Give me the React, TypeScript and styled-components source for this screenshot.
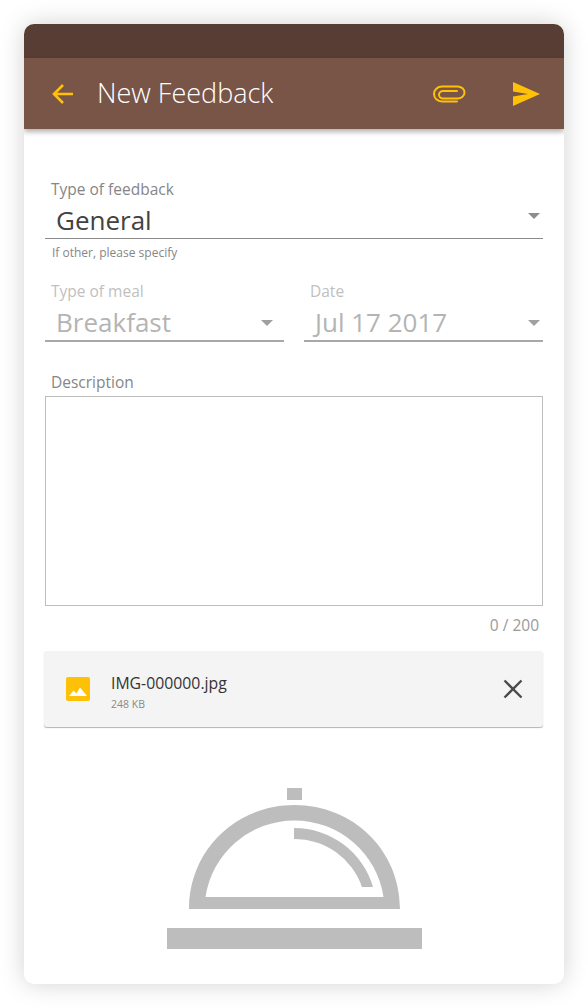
import React from 'react';
import styled, { createGlobalStyle } from 'styled-components';

const GlobalStyle = createGlobalStyle`
  html, body {
    margin: 0;
    padding: 0;
    background: #fff;
    font-family: 'Open Sans', 'Noto Sans', sans-serif;
  }
`;

const Page = styled.div`
  width: 588px;
  height: 1008px;
  padding: 24px;
  box-sizing: border-box;
  overflow: hidden;
`;

const Card = styled.div`
  width: 540px;
  height: 960px;
  background: #fff;
  border-radius: 10px;
  overflow: hidden;
  box-shadow: 0 0 24px rgba(0, 0, 0, 0.18);
  display: flex;
  flex-direction: column;
`;

const StatusBar = styled.div`
  height: 34px;
  background: #573d33;
`;

const Toolbar = styled.header`
  height: 71px;
  background: #795548;
  display: flex;
  align-items: center;
  padding: 0 24px 0 27px;
  box-shadow: 0 3px 5px rgba(0, 0, 0, 0.3);
  position: relative;
`;

const Title = styled.h1`
  margin: 0 0 2px 22px;
  flex: 1;
  font-size: 27px;
  font-weight: 300;
  color: #fff;
  line-height: 34px;
`;

const ToolbarIcons = styled.div`
  display: flex;
  align-items: center;
  gap: 46px;
`;

const Form = styled.div`
  padding: 50px 21px 0;
  display: flex;
  flex-direction: column;
`;

const Label = styled.label<{ $muted?: boolean }>`
  display: block;
  padding: 1px 0 0 6px;
  font-size: 15.5px;
  line-height: 18px;
  color: ${p => (p.$muted ? '#c0c0c0' : '#868686')};
`;

const SelectRow = styled.div<{ $muted?: boolean; $caretGap?: number }>`
  display: flex;
  align-items: center;
  justify-content: space-between;
  height: 36px;
  padding: 4px ${p => p.$caretGap ?? 3}px 0 11px;
  border-bottom: ${p => (p.$muted ? '2px solid #a8a8a8' : '1px solid #8a8a8a')};
  font-size: 26px;
  color: ${p => (p.$muted ? '#b4b4b4' : '#424242')};
`;

const Caret = styled.span<{ $muted?: boolean }>`
  width: 0;
  height: 0;
  border-left: 6.5px solid transparent;
  border-right: 6.5px solid transparent;
  border-top: 6.5px solid ${p => (p.$muted ? '#a0a0a0' : '#8e8e8e')};
  margin-top: ${p => (p.$muted ? '2px' : '0')};
  margin-bottom: ${p => (p.$muted ? '0' : '8px')};
`;

const Hint = styled.div`
  padding: 5px 0 0 7px;
  font-size: 12px;
  line-height: 17px;
  color: #868686;
`;

const TwoCols = styled.div`
  display: grid;
  grid-template-columns: 239px 239px;
  gap: 20px;
  margin-top: 20px;
`;

const Description = styled.div`
  height: 208px;
  margin-top: 5px;
  border: 1px solid #bdbdbd;
`;

const DescriptionBlock = styled.div`
  margin-top: 30px;
`;

const Counter = styled.div`
  text-align: right;
  padding: 10px 4px 0 0;
  font-size: 15.5px;
  line-height: 19px;
  color: #9a9a9a;
`;

const Attachment = styled.div`
  margin: 16px 0 0 -1px;
  height: 76px;
  background: #f4f4f4;
  border-radius: 3px;
  box-shadow: 0 1px 1px rgba(0, 0, 0, 0.3);
  display: flex;
  align-items: center;
  padding: 0 20px 0 22px;
`;

const FileInfo = styled.div`
  flex: 1;
  margin-left: 21px;
  padding-top: 4px;
`;

const FileName = styled.div`
  font-size: 15.8px;
  line-height: 20px;
  color: #333;
`;

const FileSize = styled.div`
  font-size: 10.5px;
  line-height: 12px;
  margin-top: 5px;
  color: #8a8a8a;
`;

const Illustration = styled.div`
  display: flex;
  justify-content: center;
  margin-top: 61px;
`;

const BackIcon = () => (
  <svg width="24" height="24" viewBox="0 0 24 24" fill="none" stroke="#ffc107" strokeWidth="2.6">
    <path d="M22 12H3M12 3l-9 9 9 9" />
  </svg>
);

const ClipIcon = () => (
  <svg width="33" height="18" viewBox="0 0 33 18" fill="none" stroke="#ffc107" strokeWidth="2" strokeLinecap="round">
    <path d="M24 16.5H9C4.5 16.5 1 13.2 1 9S4.5 1.5 9 1.5h15.5c4 0 7 2.7 7 6s-3 6-7 6H10c-2.2 0-4-1.6-4-3.7S7.800 6 10 6h14" />
  </svg>
);

const SendIcon = () => (
  <svg width="28" height="24" viewBox="0 0 28 24" fill="#ffc107">
    <path d="M1 0l27 12L1 24v-9.500L16 12 1 9.500z" />
  </svg>
);

const ImageIcon = () => (
  <svg width="24" height="24" viewBox="0 0 24 24">
    <rect width="24" height="24" rx="2" fill="#ffc107" />
    <path d="M3 19l4.500-5.500 3 3 3.500-6 7 8.500z" fill="#fff" />
  </svg>
);

const CloseIcon = () => (
  <svg width="20" height="20" viewBox="0 0 20 20" stroke="#4a4a4a" strokeWidth="2.4" fill="none">
    <path d="M1.500 1.500l17 17M18.500 1.500l-17 17" />
  </svg>
);

const BellIcon = () => (
  <svg width="255" height="161" viewBox="0 0 255 161" fill="#bdbdbd">
    <rect x="120" y="0" width="15" height="12" />
    <path
      fillRule="evenodd"
      d="M22 121C22 62 69 17 127.500 17S233 62 233 121ZM38.500 109H216.500A90 90 0 0 0 38.500 109Z"
    />
    <path d="M127 40A82 82 0 0 1 206 99H195A71 71 0 0 0 127 51Z" />
    <rect x="0" y="140" width="255" height="21" />
  </svg>
);

const App = () => (
  <>
    <GlobalStyle />
    <Page>
      <Card>
        <StatusBar />
        <Toolbar>
          <BackIcon />
          <Title>New Feedback</Title>
          <ToolbarIcons>
            <ClipIcon />
            <SendIcon />
          </ToolbarIcons>
        </Toolbar>
        <Form>
          <Label>Type of feedback</Label>
          <SelectRow>
            General
            <Caret />
          </SelectRow>
          <Hint>If other, please specify</Hint>
          <TwoCols>
            <div>
              <Label $muted>Type of meal</Label>
              <SelectRow $muted $caretGap={11}>
                Breakfast
                <Caret $muted />
              </SelectRow>
            </div>
            <div>
              <Label $muted>Date</Label>
              <SelectRow $muted>
                Jul 17 2017
                <Caret $muted />
              </SelectRow>
            </div>
          </TwoCols>
          <DescriptionBlock>
            <Label>Description</Label>
            <Description />
          </DescriptionBlock>
          <Counter>0 / 200</Counter>
          <Attachment>
            <ImageIcon />
            <FileInfo>
              <FileName>IMG-000000.jpg</FileName>
              <FileSize>248 KB</FileSize>
            </FileInfo>
            <CloseIcon />
          </Attachment>
          <Illustration>
            <BellIcon />
          </Illustration>
        </Form>
      </Card>
    </Page>
  </>
);

export default App;
